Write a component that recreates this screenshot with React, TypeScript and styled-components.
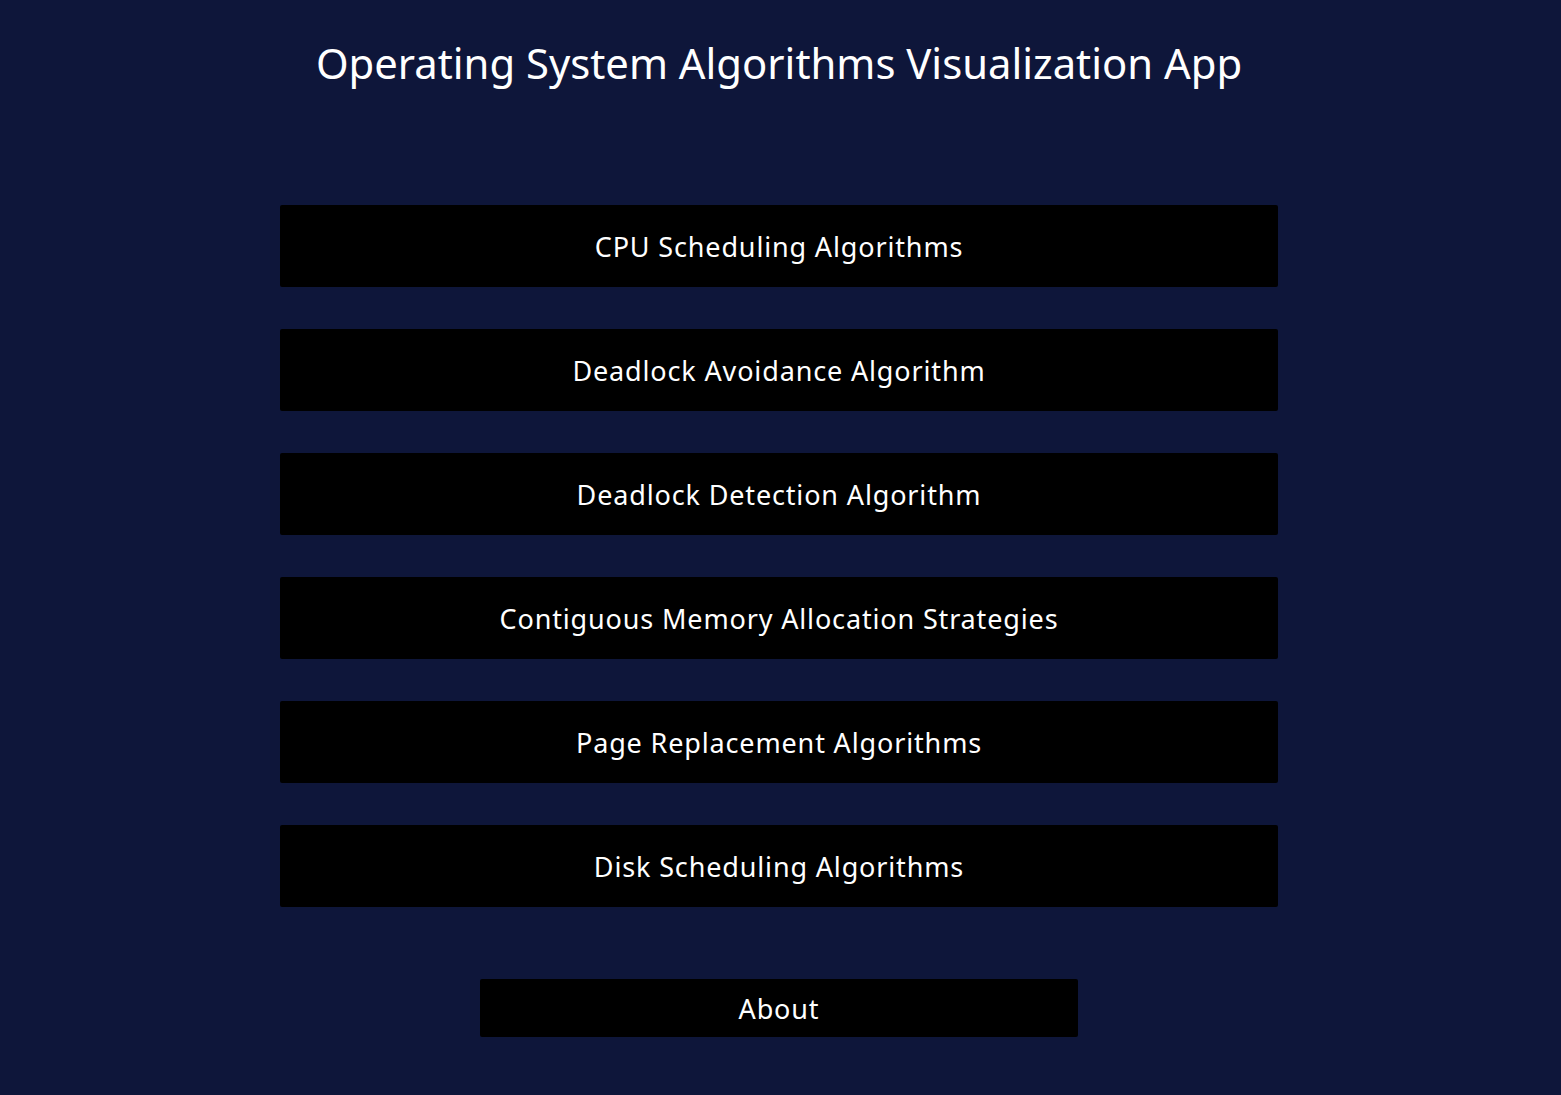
import styled, { createGlobalStyle } from "styled-components";

const GlobalStyle = createGlobalStyle`
  html, body {
    margin: 0;
    padding: 0;
    background: #0e163a;
  }
  body {
    font-family: "Noto Sans", "Open Sans", sans-serif;
    color: #ffffff;
  }
`;

const menuItems = [
  "CPU Scheduling Algorithms",
  "Deadlock Avoidance Algorithm",
  "Deadlock Detection Algorithm",
  "Contiguous Memory Allocation Strategies",
  "Page Replacement Algorithms",
  "Disk Scheduling Algorithms",
];

const App = () => {
  return (
    <>
      <GlobalStyle />
      <Page>
        <Title>Operating System Algorithms Visualization App</Title>
        <Menu>
          {menuItems.map((item) => (
            <MenuButton key={item}>{item}</MenuButton>
          ))}
        </Menu>
        <AboutButton>About</AboutButton>
      </Page>
    </>
  );
};

const Page = styled.div`
  min-height: 1095px;
  display: flex;
  flex-direction: column;
  align-items: center;
  padding: 36px 3px 0 0;
  box-sizing: border-box;
`;

const Title = styled.h1`
  margin: 0;
  font-size: 41.8px;
  font-weight: 400;
  line-height: 54px;
  color: #ffffff;
`;

const Menu = styled.div`
  margin-top: 115px;
  width: 998px;
  display: flex;
  flex-direction: column;
  gap: 42px;
`;

const MenuButton = styled.button`
  height: 82px;
  width: 100%;
  padding: 0;
  background: #000000;
  border: none;
  border-radius: 2px;
  color: #ffffff;
  font-family: "Noto Sans", sans-serif;
  font-size: 27px;
  letter-spacing: 0.85px;
  cursor: pointer;
`;

const AboutButton = styled(MenuButton)`
  margin-top: 72px;
  width: 598px;
  height: 58px;
`;

export default App;
